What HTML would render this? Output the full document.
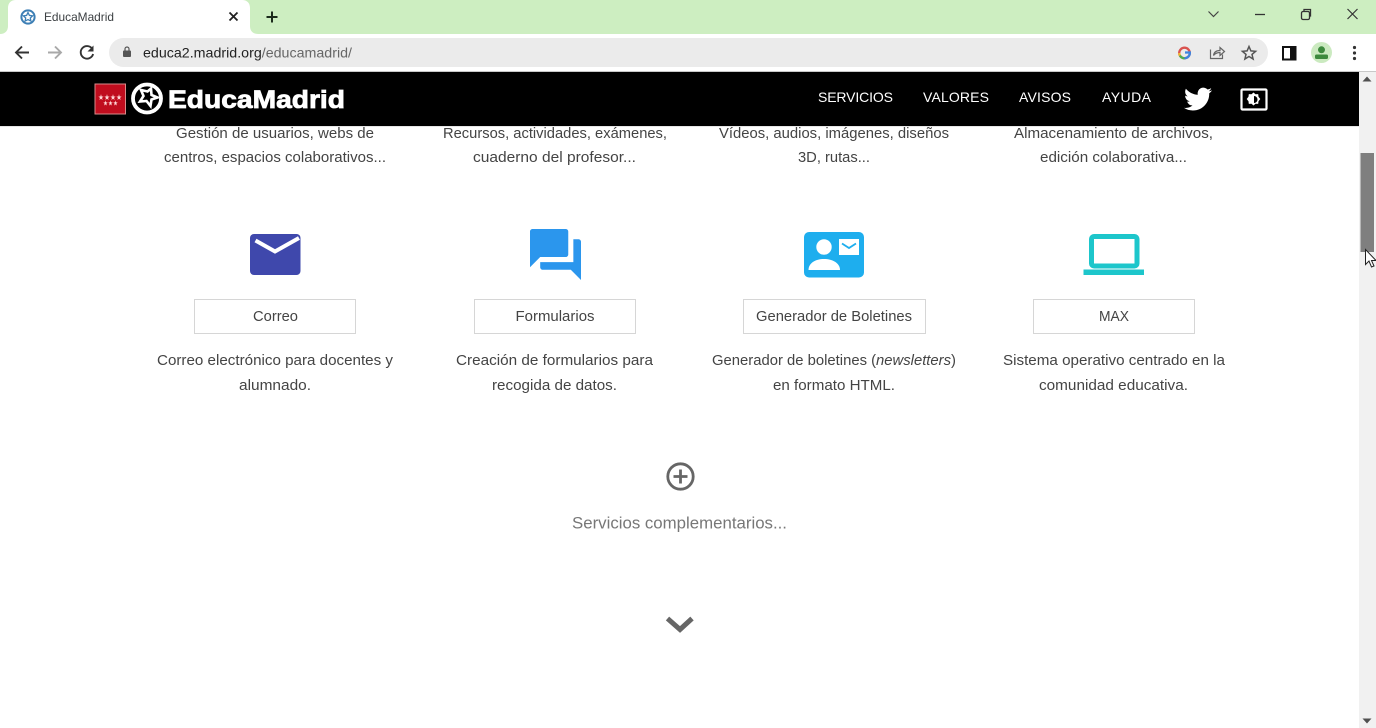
<!DOCTYPE html>
<html lang="es"><head><meta charset="utf-8"><title>EducaMadrid</title>
<style>
html,body{margin:0;padding:0;background:#fff;width:1376px;height:728px;overflow:hidden}
svg{display:block}
text{font-family:"Liberation Sans",sans-serif}
.b{font-size:14.5px;fill:#444}
.n{font-size:14px;fill:#fff}
.c{font-size:14.5px;fill:#444}
</style></head><body>
<svg width="1376" height="728" viewBox="0 0 1376 728" xmlns="http://www.w3.org/2000/svg">
<rect width="1376" height="728" fill="#fff"/>
<!-- tab strip -->
<rect width="1376" height="34" fill="#cdeec1"/>
<path d="M0 34C5 34 8 31 8 26V8C8 3 11 0 16 0H242C247 0 250 3 250 8V26C250 31 253 34 258 34Z" fill="#fff"/>
<circle cx="28" cy="17" r="6.600" fill="none" stroke="#3d7fb5" stroke-width="2"/>
<path d="M28 12.500l1.400 2.900 3.200.4-2.300 2.200.6 3.100-2.900-1.500-2.900 1.500.6-3.100-2.300-2.200 3.200-.4z" fill="none" stroke="#3d7fb5" stroke-width="1.300"/>
<text x="44" y="21" font-size="12" fill="#3c4043" textLength="70" lengthAdjust="spacingAndGlyphs">EducaMadrid</text>
<path d="M229.500 12.500l8 8m0-8l-8 8" stroke="#222" stroke-width="1.800"/>
<path d="M272 11.500v11m-5.500-5.500h11" stroke="#1b2b1b" stroke-width="2"/>
<path d="M1208.500 11.500l5 5 5-5" fill="none" stroke="#444" stroke-width="1.200"/>
<path d="M1255 14.500h10" stroke="#333" stroke-width="1.300"/>
<rect x="1301.500" y="11.500" width="8" height="8" rx="1.500" fill="none" stroke="#333" stroke-width="1.300"/>
<path d="M1304 11V9.500h6.500V16H1310" fill="none" stroke="#333" stroke-width="1.300"/>
<path d="M1347.500 9l10 10m0-10l-10 10" stroke="#333" stroke-width="1.200"/>
<!-- toolbar -->
<rect y="34" width="1376" height="37" fill="#fff"/>
<rect y="71" width="1376" height="1" fill="#c8c8c8"/>
<path d="M29 52.500H16.500m5.500-6l-6 6 6 6" fill="none" stroke="#333" stroke-width="1.900"/>
<path d="M48 52.500h12.500m-5.500-6l6 6-6 6" fill="none" stroke="#a9a9a9" stroke-width="1.900"/>
<path d="M92 48.500a6.300 6.300 0 1 0 1.100 5.500" fill="none" stroke="#333" stroke-width="1.900"/>
<path d="M93.500 45.500v6h-6z" fill="#333"/>
<rect x="109" y="38" width="1159" height="29" rx="14.500" fill="#ebebeb"/>
<rect x="123" y="50.500" width="8" height="6.500" rx="1" fill="#555"/>
<path d="M125 50.500v-1.500a2 2 0 0 1 4 0v1.500" fill="none" stroke="#555" stroke-width="1.200"/>
<text x="143" y="57.500" font-size="14" textLength="209" lengthAdjust="spacingAndGlyphs"><tspan fill="#222">educa2.madrid.org</tspan><tspan fill="#666">/educamadrid/</tspan></text>
<!-- omnibox icons -->
<circle cx="1184.500" cy="53" r="5.300" fill="none" stroke="#d9534f" stroke-width="2.300"/>
<path d="M1179.300 53a5.300 5.300 0 0 0 .6 2.600" fill="none" stroke="#eebb33" stroke-width="2.300"/>
<path d="M1184.500 58.300a5.300 5.300 0 0 1-4.600-2.700" fill="none" stroke="#4caf50" stroke-width="2.300"/>
<path d="M1189.800 53a5.300 5.300 0 0 1-5.300 5.300" fill="none" stroke="#3d85e0" stroke-width="2.300"/>
<path d="M1185 52.500h6" stroke="#3d85e0" stroke-width="2.300"/>
<path d="M1210.500 49.500v9h12v-4" fill="none" stroke="#666" stroke-width="1.200"/>
<path d="M1213.500 55.500c.5-3.500 3-5 6.500-5v-3l4.500 4-4.500 4v-3c-3 0-5 1-6.500 3z" fill="none" stroke="#666" stroke-width="1.200"/>
<path d="M1249 46.500l1.900 4.400 4.700.4-3.600 3.100 1.100 4.600-4.100-2.500-4.100 2.500 1.100-4.600-3.600-3.100 4.700-.4z" fill="none" stroke="#555" stroke-width="1.500"/>
<rect x="1283" y="47" width="12.500" height="12.500" fill="none" stroke="#111" stroke-width="2"/>
<rect x="1290" y="47" width="5.500" height="12.500" fill="#111"/>
<circle cx="1321.500" cy="52.500" r="10.500" fill="#cbeac0"/>
<circle cx="1321.500" cy="49.800" r="3.500" fill="#3d8a3d"/>
<rect x="1315" y="54.500" width="13" height="4.500" rx="1.500" fill="#3d8a3d"/>
<circle cx="1354.500" cy="47.500" r="1.600" fill="#333"/><circle cx="1354.500" cy="53" r="1.600" fill="#333"/><circle cx="1354.500" cy="58.500" r="1.600" fill="#333"/>
<!-- scrollbar -->
<rect x="1359" y="72" width="17" height="656" fill="#f1f1f1"/>
<rect x="1360.500" y="153" width="13.500" height="99" fill="#7f7f7f"/>
<path d="M1367 76.500l4.500 5h-9z" fill="#505050"/>
<path d="M1367 723.500l4.500-5h-9z" fill="#505050"/>
<!-- header -->
<rect y="72" width="1359" height="54" fill="#000"/>
<rect y="126" width="1359" height="1" fill="#e6e6e6"/>
<rect x="95" y="84" width="30.500" height="30" fill="#c00d1e" stroke="#d98a8a" stroke-width="1"/>
<text x="98" y="100" font-size="8" fill="#ffd8d8" textLength="24" lengthAdjust="spacingAndGlyphs">★★★★</text>
<text x="103" y="105.500" font-size="7" fill="#ffd8d8" textLength="15" lengthAdjust="spacingAndGlyphs">★★★</text>
<circle cx="147" cy="98.500" r="14" fill="none" stroke="#fff" stroke-width="3.800"/>
<path d="M151 88.500l.5 6.500 6 2.500-6 2 -1 6.500-4-5-6.500.5 3.500-5.500-2.500-6 6.500 1.500z" fill="none" stroke="#fff" stroke-width="2.600"/>
<text x="168" y="108" font-size="25" font-weight="700" fill="#fff" stroke="#fff" stroke-width=".8" textLength="177" lengthAdjust="spacingAndGlyphs">EducaMadrid</text>
<text class="n" x="818" y="102" textLength="75">SERVICIOS</text>
<text class="n" x="923" y="102" textLength="66">VALORES</text>
<text class="n" x="1019" y="102" textLength="52">AVISOS</text>
<text class="n" x="1102" y="102" textLength="49">AYUDA</text>
<g transform="translate(1184 85) scale(1.170)"><path fill="#fff" d="M23.953 4.570a10 10 0 01-2.825.775 4.958 4.958 0 002.163-2.723c-.951.555-2.005.959-3.127 1.184a4.920 4.920 0 00-8.384 4.482C7.690 8.095 4.067 6.130 1.640 3.162a4.822 4.822 0 00-.666 2.475c0 1.710.870 3.213 2.188 4.096a4.904 4.904 0 01-2.228-.616v.060a4.923 4.923 0 003.946 4.827 4.996 4.996 0 01-2.212.085 4.936 4.936 0 004.604 3.417 9.867 9.867 0 01-6.102 2.105c-.390 0-.779-.023-1.170-.067a13.995 13.995 0 007.557 2.209c9.053 0 13.998-7.496 13.998-13.985 0-.210 0-.420-.015-.630A9.935 9.935 0 0024 4.590z"/></g>
<rect x="1241.500" y="89.500" width="25" height="20" rx="1" fill="none" stroke="#fff" stroke-width="2.200"/>
<path d="M1253.500 92.500l2 1.800 2.700-.2.300 2.700 1.800 2.200-1.800 2.200-.3 2.700-2.700-.2-2 1.800-2-1.800-2.700.2-.3-2.700-1.800-2.200 1.800-2.200.3-2.700 2.700.2z" fill="#fff"/>
<path d="M1254 96a3.500 3.500 0 0 1 0 7z" fill="#000"/>
<!-- top descriptions -->
<text class="c" x="176" y="138" textLength="198" lengthAdjust="spacingAndGlyphs">Gestión de usuarios, webs de</text>
<text class="c" x="164" y="162" textLength="222" lengthAdjust="spacingAndGlyphs">centros, espacios colaborativos...</text>
<text class="c" x="443" y="138" textLength="224" lengthAdjust="spacingAndGlyphs">Recursos, actividades, exámenes,</text>
<text class="c" x="473" y="162" textLength="163" lengthAdjust="spacingAndGlyphs">cuaderno del profesor...</text>
<text class="c" x="719" y="138" textLength="230" lengthAdjust="spacingAndGlyphs">Vídeos, audios, imágenes, diseños</text>
<text class="c" x="798" y="162" textLength="72" lengthAdjust="spacingAndGlyphs">3D, rutas...</text>
<text class="c" x="1014" y="138" textLength="199" lengthAdjust="spacingAndGlyphs">Almacenamiento de archivos,</text>
<text class="c" x="1040" y="162" textLength="147" lengthAdjust="spacingAndGlyphs">edición colaborativa...</text>
<!-- icons -->
<rect x="250" y="234" width="50.500" height="41" rx="4" fill="#3f48ac"/>
<path d="M255.500 240.500l19.500 11 24-13.500" fill="none" stroke="#fff" stroke-width="4"/>
<g transform="translate(524.900 223.900) scale(2.550)"><path fill="#2b96ed" d="M21 6h-2v9H6v2c0 .55.45 1 1 1h11l4 4V7c0-.55-.45-1-1-1zm-4 6V3c0-.55-.45-1-1-1H3c-.55 0-1 .45-1 1v14l4-4h10c.55 0 1-.45 1-1z"/></g>
<rect x="804" y="232" width="60" height="45.500" rx="5" fill="#1eaeee"/>
<circle cx="824" cy="247" r="7.700" fill="#fff"/>
<path d="M808.500 270c0-7 7-11 15.500-11s16 4 16 11z" fill="#fff"/>
<rect x="839" y="239" width="20" height="16" fill="#fff"/>
<path d="M842 243.500l7 4.500 7-4.500" fill="none" stroke="#1eaeee" stroke-width="1.800"/>
<rect x="1091.500" y="236.500" width="45.500" height="29.500" rx="2.500" fill="none" stroke="#1dc6cb" stroke-width="5"/>
<rect x="1083.500" y="269.500" width="60.500" height="5.500" fill="#1dc6cb"/>
<!-- buttons -->
<g fill="#fff" stroke="#d6d6d6" stroke-width="1">
<rect x="194.500" y="299.500" width="161" height="34"/>
<rect x="474.500" y="299.500" width="161" height="34"/>
<rect x="743.500" y="299.500" width="182" height="34"/>
<rect x="1033.500" y="299.500" width="161" height="34"/>
</g>
<text class="b" x="253" y="321" textLength="45" lengthAdjust="spacingAndGlyphs">Correo</text>
<text class="b" x="515.500" y="321" textLength="79" lengthAdjust="spacingAndGlyphs">Formularios</text>
<text class="b" x="756" y="321" textLength="156" lengthAdjust="spacingAndGlyphs">Generador de Boletines</text>
<text class="b" x="1099" y="321" textLength="30" lengthAdjust="spacingAndGlyphs">MAX</text>
<!-- descriptions -->
<text class="c" x="157" y="365" textLength="236" lengthAdjust="spacingAndGlyphs">Correo electrónico para docentes y</text>
<text class="c" x="239" y="390" textLength="72" lengthAdjust="spacingAndGlyphs">alumnado.</text>
<text class="c" x="456" y="365" textLength="197" lengthAdjust="spacingAndGlyphs">Creación de formularios para</text>
<text class="c" x="492" y="390" textLength="125" lengthAdjust="spacingAndGlyphs">recogida de datos.</text>
<text class="c" x="712" y="365" textLength="244" lengthAdjust="spacingAndGlyphs">Generador de boletines (<tspan font-style="italic">newsletters</tspan>)</text>
<text class="c" x="773" y="390" textLength="122" lengthAdjust="spacingAndGlyphs">en formato HTML.</text>
<text class="c" x="1003" y="365" textLength="222" lengthAdjust="spacingAndGlyphs">Sistema operativo centrado en la</text>
<text class="c" x="1039" y="390" textLength="149" lengthAdjust="spacingAndGlyphs">comunidad educativa.</text>
<!-- complementarios -->
<circle cx="680.500" cy="476.500" r="12.700" fill="none" stroke="#666" stroke-width="2.800"/>
<path d="M680.500 469.500v14m-7-7h14" stroke="#666" stroke-width="2.800"/>
<text x="572" y="528.500" font-size="16.500" fill="#777" textLength="215" lengthAdjust="spacingAndGlyphs">Servicios complementarios...</text>
<path d="M667.500 618.500L680 629.500 692 618.500" fill="none" stroke="#666" stroke-width="5"/>
<!-- cursor -->
<path d="M1365.500 249.500v15l3.500-3.500 2.500 6 2.500-1-2.500-5.500h4.500z" fill="#fff" stroke="#222" stroke-width="1"/>
</svg>
</body></html>
